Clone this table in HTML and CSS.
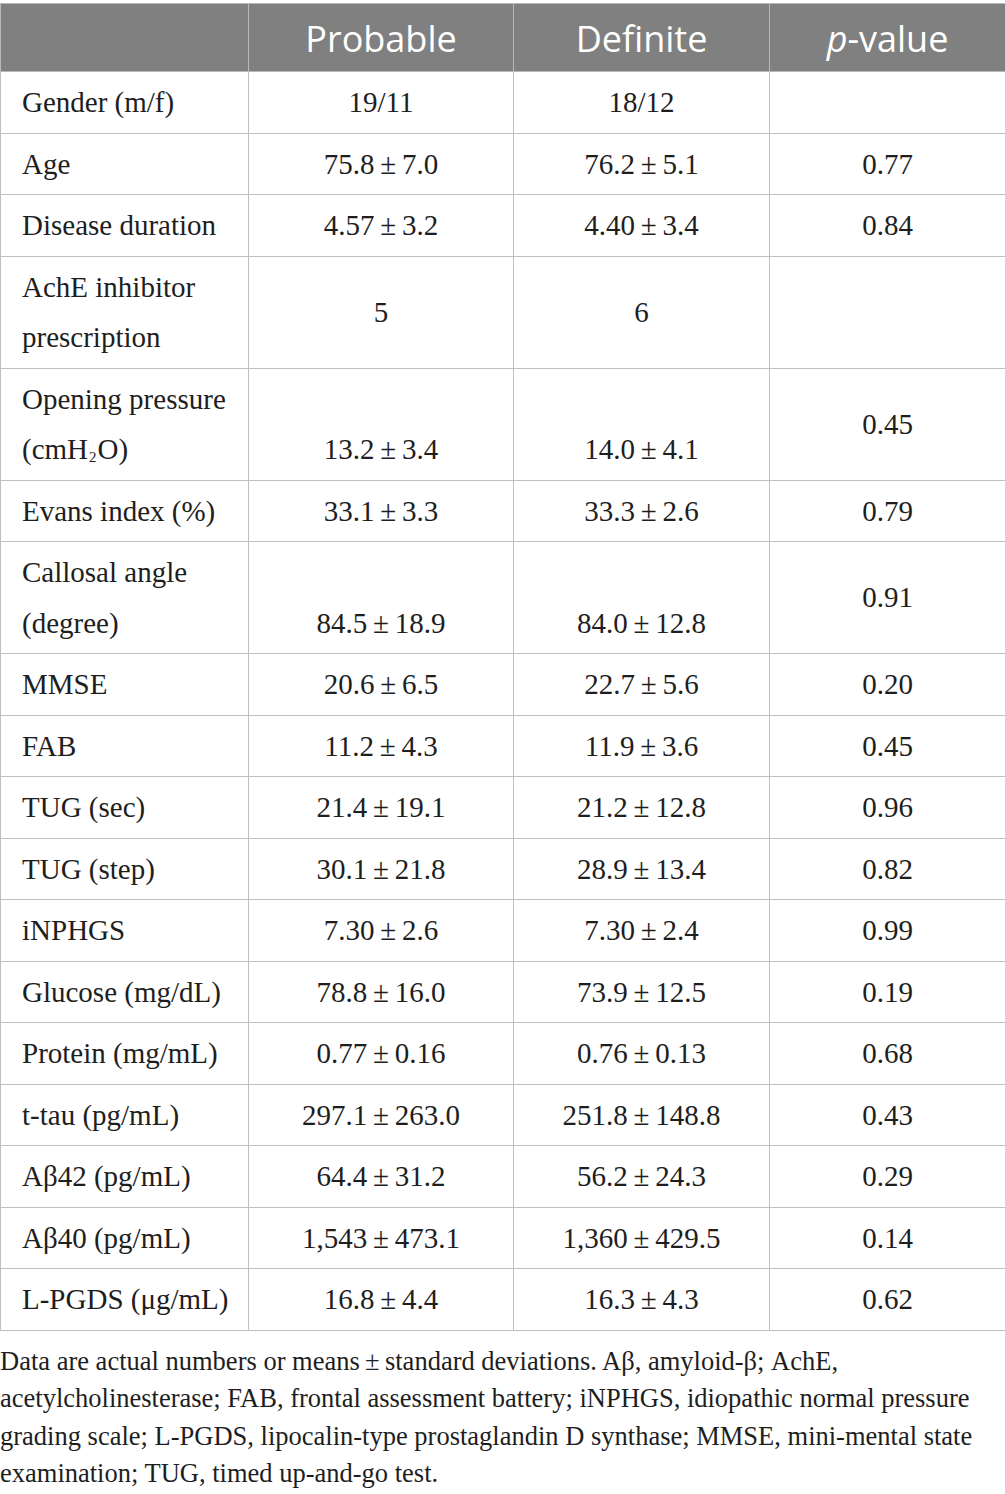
FILE: index.html
```html
<!DOCTYPE html>
<html>
<head>
<meta charset="utf-8">
<link rel="stylesheet" href="styles.css">
</head>
<body>
<table class="data">
  <colgroup>
    <col class="c1"><col class="c2"><col class="c3"><col class="c4">
  </colgroup>
  <thead>
    <tr><th></th><th>Probable</th><th>Definite</th><th><i>p</i>-value</th></tr>
  </thead>
  <tbody>
    <tr><td>Gender (m/f)</td><td>19/11</td><td>18/12</td><td></td></tr>
    <tr><td>Age</td><td>75.8&thinsp;±&thinsp;7.0</td><td>76.2&thinsp;±&thinsp;5.1</td><td>0.77</td></tr>
    <tr><td>Disease duration</td><td>4.57&thinsp;±&thinsp;3.2</td><td>4.40&thinsp;±&thinsp;3.4</td><td>0.84</td></tr>
    <tr><td>AchE inhibitor prescription</td><td>5</td><td>6</td><td></td></tr>
    <tr><td>Opening pressure (cmH<sub>2</sub>O)</td><td class="bot">13.2&thinsp;±&thinsp;3.4</td><td class="bot">14.0&thinsp;±&thinsp;4.1</td><td>0.45</td></tr>
    <tr><td>Evans index (%)</td><td>33.1&thinsp;±&thinsp;3.3</td><td>33.3&thinsp;±&thinsp;2.6</td><td>0.79</td></tr>
    <tr><td>Callosal angle (degree)</td><td class="bot">84.5&thinsp;±&thinsp;18.9</td><td class="bot">84.0&thinsp;±&thinsp;12.8</td><td>0.91</td></tr>
    <tr><td>MMSE</td><td>20.6&thinsp;±&thinsp;6.5</td><td>22.7&thinsp;±&thinsp;5.6</td><td>0.20</td></tr>
    <tr><td>FAB</td><td>11.2&thinsp;±&thinsp;4.3</td><td>11.9&thinsp;±&thinsp;3.6</td><td>0.45</td></tr>
    <tr><td>TUG (sec)</td><td>21.4&thinsp;±&thinsp;19.1</td><td>21.2&thinsp;±&thinsp;12.8</td><td>0.96</td></tr>
    <tr><td>TUG (step)</td><td>30.1&thinsp;±&thinsp;21.8</td><td>28.9&thinsp;±&thinsp;13.4</td><td>0.82</td></tr>
    <tr><td>iNPHGS</td><td>7.30&thinsp;±&thinsp;2.6</td><td>7.30&thinsp;±&thinsp;2.4</td><td>0.99</td></tr>
    <tr><td>Glucose (mg/dL)</td><td>78.8&thinsp;±&thinsp;16.0</td><td>73.9&thinsp;±&thinsp;12.5</td><td>0.19</td></tr>
    <tr><td>Protein (mg/mL)</td><td>0.77&thinsp;±&thinsp;0.16</td><td>0.76&thinsp;±&thinsp;0.13</td><td>0.68</td></tr>
    <tr><td>t-tau (pg/mL)</td><td>297.1&thinsp;±&thinsp;263.0</td><td>251.8&thinsp;±&thinsp;148.8</td><td>0.43</td></tr>
    <tr><td>Aβ42 (pg/mL)</td><td>64.4&thinsp;±&thinsp;31.2</td><td>56.2&thinsp;±&thinsp;24.3</td><td>0.29</td></tr>
    <tr><td>Aβ40 (pg/mL)</td><td>1,543&thinsp;±&thinsp;473.1</td><td>1,360&thinsp;±&thinsp;429.5</td><td>0.14</td></tr>
    <tr><td>L-PGDS (μg/mL)</td><td>16.8&thinsp;±&thinsp;4.4</td><td>16.3&thinsp;±&thinsp;4.3</td><td>0.62</td></tr>
  </tbody>
</table>
<p class="note">Data are actual numbers or means&thinsp;±&thinsp;standard deviations. Aβ, amyloid-β; AchE, acetylcholinesterase; FAB, frontal assessment battery; iNPHGS, idiopathic normal pressure grading scale; L-PGDS, lipocalin-type prostaglandin D synthase; MMSE, mini-mental state examination; TUG, timed up-and-go test.</p>
</body>
</html>
```
FILE: styles.css
```css
html, body {
  margin: 0;
  padding: 0;
  background: #ffffff;
}
body {
  font-family: "Liberation Serif", "Times New Roman", serif;
  color: #1e1e1e;
}
.data {
  width: 1005px;
  margin-top: 3px;
  border-collapse: collapse;
  table-layout: fixed;
}
.c1 { width: 248px; }
.c2 { width: 265px; }
.c3 { width: 256px; }
.c4 { width: 236px; }
.data th {
  background: #808080;
  color: #ffffff;
  font-family: "Open Sans", "Noto Sans", sans-serif;
  font-weight: 400;
  font-size: 36px;
  line-height: 40px;
  height: 64px;
  padding: 3px 8px 0 8px;
  border: 1px solid #b9b9b9;
  text-align: center;
  vertical-align: middle;
}
.data td {
  font-size: 29px;
  line-height: 50.5px;
  padding: 5px 8px 5px 8px;
  border: 1px solid #c0c0c0;
  text-align: center;
  vertical-align: middle;
}
.data td:first-child {
  text-align: left;
  padding-left: 21px;
  padding-right: 4px;
}
.data td.bot {
  vertical-align: bottom;
}
.data sub {
  font-size: 15px;
  line-height: 0;
  vertical-align: -3px;
  margin: 0 1px;
}
.note {
  margin: 12px 0 0 0;
  font-size: 26.5px;
  line-height: 37.5px;
  color: #1e1e1e;
}
```
